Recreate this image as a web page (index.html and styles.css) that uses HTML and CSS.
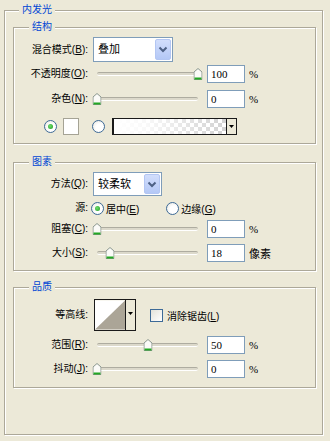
FILE: index.html
```html
<!DOCTYPE html>
<html lang="zh-CN">
<head>
  <meta charset="UTF-8" />
  <title>内发光</title>
  <link rel="stylesheet" href="styles.css">
</head>
<body>
  <div class="group dialog">
    <span class="group-title">内发光</span>

    <!-- 结构 -->
    <div class="group section sec-structure">
      <span class="group-title">结构</span>
      <div class="row h25">
        <label class="lbl">混合模式(<u>B</u>):</label>
        <div class="combo combo-blend">
          <span class="combo-text">叠加</span>
          <span class="combo-btn"><svg width="10" height="7" viewBox="0 0 10 7"><path d="M1.5 1.5 L5 5 L8.5 1.5" fill="none" stroke="#4d6185" stroke-width="2"/></svg></span>
        </div>
      </div>
      <div class="row mt3">
        <label class="lbl">不透明度(<u>O</u>):</label>
        <div class="slider"><div class="track"><span class="thumb" style="left:100%"><svg width="9" height="12" viewBox="0 0 9 12"><path d="M0.5 11.5 V4 L4.5 0.5 L8.5 4 V11.5 Z" fill="#fbfbf8" stroke="#8a968e"/><path d="M1 10.5 H8" stroke="#22a822" stroke-width="2"/></svg></span></div></div>
        <div class="num">100</div><span class="unit">%</span>
      </div>
      <div class="row mt7">
        <label class="lbl">杂色(<u>N</u>):</label>
        <div class="slider"><div class="track"><span class="thumb" style="left:0%"><svg width="9" height="12" viewBox="0 0 9 12"><path d="M0.5 11.5 V4 L4.5 0.5 L8.5 4 V11.5 Z" fill="#fbfbf8" stroke="#8a968e"/><path d="M1 10.5 H8" stroke="#22a822" stroke-width="2"/></svg></span></div></div>
        <div class="num">0</div><span class="unit">%</span>
      </div>
      <div class="row mt9">
        <span class="radio checked first-radio"></span>
        <span class="swatch"></span>
        <span class="radio grad-radio"></span>
        <div class="gradient">
          <span class="gradient-fill"></span>
          <span class="mini-btn"><svg width="5" height="3" viewBox="0 0 5 3"><path d="M0 0 H5 L2.5 3 Z" fill="#000"/></svg></span>
        </div>
      </div>
    </div>

    <!-- 图素 -->
    <div class="group section sec-elements">
      <span class="group-title">图素</span>
      <div class="row h24">
        <label class="lbl">方法(<u>Q</u>):</label>
        <div class="combo combo-method">
          <span class="combo-text">较柔软</span>
          <span class="combo-btn"><svg width="10" height="7" viewBox="0 0 10 7"><path d="M1.5 1.5 L5 5 L8.5 1.5" fill="none" stroke="#4d6185" stroke-width="2"/></svg></span>
        </div>
      </div>
      <div class="row mt3">
        <label class="lbl">源:</label>
        <span class="radio checked src-radio"></span>
        <span class="opt">居中(<u>E</u>)</span>
        <span class="radio edge-radio"></span>
        <span class="opt">边缘(<u>G</u>)</span>
      </div>
      <div class="row mt3">
        <label class="lbl">阻塞(<u>C</u>):</label>
        <div class="slider"><div class="track"><span class="thumb" style="left:0%"><svg width="9" height="12" viewBox="0 0 9 12"><path d="M0.5 11.5 V4 L4.5 0.5 L8.5 4 V11.5 Z" fill="#fbfbf8" stroke="#8a968e"/><path d="M1 10.5 H8" stroke="#22a822" stroke-width="2"/></svg></span></div></div>
        <div class="num">0</div><span class="unit">%</span>
      </div>
      <div class="row mt6">
        <label class="lbl">大小(<u>S</u>):</label>
        <div class="slider"><div class="track"><span class="thumb" style="left:13%"><svg width="9" height="12" viewBox="0 0 9 12"><path d="M0.5 11.5 V4 L4.5 0.5 L8.5 4 V11.5 Z" fill="#fbfbf8" stroke="#8a968e"/><path d="M1 10.5 H8" stroke="#22a822" stroke-width="2"/></svg></span></div></div>
        <div class="num">18</div><span class="unit">像素</span>
      </div>
    </div>

    <!-- 品质 -->
    <div class="group section sec-quality">
      <span class="group-title">品质</span>
      <div class="row h32">
        <label class="lbl">等高线:</label>
        <div class="contour">
          <svg class="contour-pic" width="31" height="30" viewBox="0 0 31 30"><rect width="31" height="30" fill="#fff"/><path d="M0 30 L31 0 V30 Z" fill="#aba597"/></svg>
          <span class="mini-btn"><svg width="5" height="3" viewBox="0 0 5 3"><path d="M0 0 H5 L2.5 3 Z" fill="#000"/></svg></span>
        </div>
        <span class="checkbox"></span>
        <span class="opt">消除锯齿(<u>L</u>)</span>
      </div>
      <div class="row mt5">
        <label class="lbl">范围(<u>R</u>):</label>
        <div class="slider"><div class="track"><span class="thumb" style="left:50%"><svg width="9" height="12" viewBox="0 0 9 12"><path d="M0.5 11.5 V4 L4.5 0.5 L8.5 4 V11.5 Z" fill="#fbfbf8" stroke="#8a968e"/><path d="M1 10.5 H8" stroke="#22a822" stroke-width="2"/></svg></span></div></div>
        <div class="num">50</div><span class="unit">%</span>
      </div>
      <div class="row mt6">
        <label class="lbl">抖动(<u>J</u>):</label>
        <div class="slider"><div class="track"><span class="thumb" style="left:0%"><svg width="9" height="12" viewBox="0 0 9 12"><path d="M0.5 11.5 V4 L4.5 0.5 L8.5 4 V11.5 Z" fill="#fbfbf8" stroke="#8a968e"/><path d="M1 10.5 H8" stroke="#22a822" stroke-width="2"/></svg></span></div></div>
        <div class="num">0</div><span class="unit">%</span>
      </div>
    </div>
  </div>
</body>
</html>
```

FILE: styles.css
```css
* {
  box-sizing: border-box;
  margin: 0;
  padding: 0;
}

body {
  background-color: #ece9d8;
  font-family: 'Liberation Sans', 'Noto Sans CJK SC', sans-serif;
  font-size: 10px;
  color: #000;
  width: 330px;
  height: 441px;
  overflow: hidden;
}

u {
  text-decoration: underline;
}

/* etched frames */
.group {
  position: relative;
  border: 1px solid #aca899;
  box-shadow: inset 1px 1px 0 #fff, 1px 1px 0 #fff;
}

.group-title {
  position: absolute;
  top: -8px;
  left: 14px;
  padding: 0 3px;
  line-height: 14px;
  background-color: #ece9d8;
  color: #0046d5;
}

.dialog {
  margin: 10px 7px 0 4px;
  height: 425px;
  padding: 16px 6px 0 8px;
}

.section .group-title {
  left: 15px;
}

.sec-structure {
  padding: 9px 0 8px;
}

.sec-elements {
  margin-top: 18px;
  padding: 9px 0 8px;
}

.sec-quality {
  margin-top: 16px;
  padding: 11px 0 9px;
}

/* rows */
.row {
  display: flex;
  align-items: center;
  height: 18px;
}

.h24 { height: 24px; }
.h25 { height: 25px; }
.h32 { height: 32px; }
.mt3 { margin-top: 3px; }
.mt5 { margin-top: 5px; }
.mt6 { margin-top: 6px; }
.mt7 { margin-top: 7px; }
.mt9 { margin-top: 9px; }

.lbl {
  width: 74px;
  text-align: right;
  white-space: nowrap;
  line-height: 14px;
}

/* combo box */
.combo {
  display: flex;
  height: 100%;
  margin-left: 5px;
  background: #fff;
  border: 1px solid #7f9db9;
  padding: 1px;
}

.combo-blend { width: 80px; }
.combo-method { width: 69px; }

.combo-text {
  flex: 1;
  padding-left: 3px;
  font-size: 11px;
  line-height: 20px;
}

.combo-btn {
  width: 16px;
  display: flex;
  align-items: center;
  justify-content: center;
  border: 1px solid #b3c6f3;
  border-radius: 2px;
  background: linear-gradient(#d2defc, #b4c8f6);
}

/* slider */
.slider {
  width: 111px;
  margin-left: 4px;
  padding: 0 5px;
}

.track {
  position: relative;
  height: 4px;
  border-top: 1px solid #aeaca0;
  border-bottom: 1px solid #fff;
  background: #dcd9cb;
  border-radius: 2px;
}

.thumb {
  position: absolute;
  top: -5px;
  transform: translateX(-50%);
  display: block;
  width: 9px;
  height: 12px;
}

.thumb svg {
  display: block;
}

/* number field */
.num {
  width: 38px;
  height: 18px;
  margin-left: 4px;
  background: #fff;
  border: 1px solid #7f9db9;
  padding-left: 3px;
  font-family: 'Liberation Serif', 'Noto Sans CJK SC', serif;
  font-size: 11px;
  line-height: 16px;
}

.unit {
  margin-left: 4px;
  font-family: 'Liberation Serif', 'Noto Sans CJK SC', serif;
  font-size: 11px;
}

/* radios and checkbox */
.radio {
  width: 13px;
  height: 13px;
  border-radius: 50%;
  border: 1px solid #3d6a97;
  background: radial-gradient(circle at 60% 60%, #fff 40%, #e3e2da 100%);
  display: flex;
  align-items: center;
  justify-content: center;
}

.radio.checked::after {
  content: "";
  width: 5px;
  height: 5px;
  border-radius: 50%;
  background: radial-gradient(circle at 40% 40%, #6fdc6f, #1d9b1d);
}

.first-radio { margin-left: 30px; }
.grad-radio { margin-left: 13px; }
.src-radio { margin-left: 3px; }
.edge-radio { margin-left: 27px; }

.opt {
  margin-left: 2px;
  white-space: nowrap;
}

.checkbox {
  width: 13px;
  height: 13px;
  margin-left: 14px;
  border: 1px solid #3d6a97;
  background: linear-gradient(135deg, #e3e2da, #fff);
}

.checkbox + .opt {
  margin-left: 4px;
}

/* colour swatch */
.swatch {
  width: 16px;
  height: 17px;
  margin-left: 6px;
  background: #fff;
  border: 1px solid #a5a395;
}

/* gradient picker */
.gradient {
  display: flex;
  width: 125px;
  height: 17px;
  margin-left: 7px;
  border: 1px solid #1a1a1a;
  border-left-width: 2px;
}

.gradient-fill {
  flex: 1;
  background:
    linear-gradient(to right, #fff 0%, rgba(255, 255, 255, 0.85) 30%, rgba(255, 255, 255, 0) 100%),
    repeating-conic-gradient(#d2d2d2 0 25%, #fff 0 50%) 0 0 / 8px 8px;
}

.mini-btn {
  width: 10px;
  display: flex;
  justify-content: center;
  align-items: center;
  border-left: 1px solid #1a1a1a;
  background: #ece9d8;
}

/* contour picker */
.contour {
  display: flex;
  width: 42px;
  height: 32px;
  margin-left: 6px;
  border: 1px solid #1a1a1a;
}

.contour-pic {
  display: block;
}

.contour .mini-btn {
  align-items: flex-start;
  padding-top: 12px;
}
```
